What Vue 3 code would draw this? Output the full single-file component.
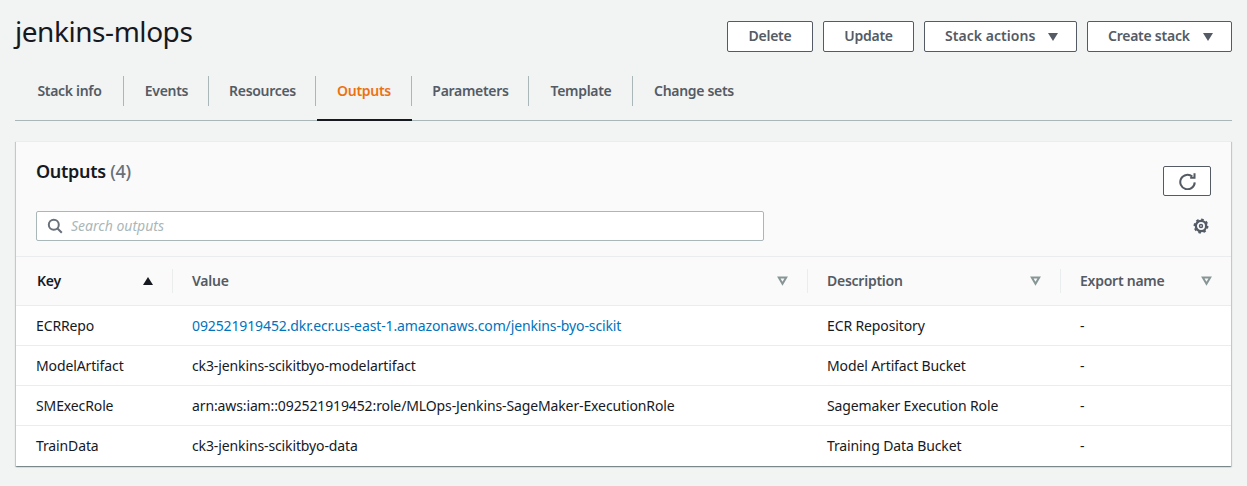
<script setup>
const tabs = ["Stack info", "Events", "Resources", "Outputs", "Parameters", "Template", "Change sets"];
const activeTab = "Outputs";

const columns = ["Value", "Description", "Export name"];

const outputs = [
  {
    key: "ECRRepo",
    value: "092521919452.dkr.ecr.us-east-1.amazonaws.com/jenkins-byo-scikit",
    link: true,
    description: "ECR Repository",
  },
  { key: "ModelArtifact", value: "ck3-jenkins-scikitbyo-modelartifact", description: "Model Artifact Bucket" },
  {
    key: "SMExecRole",
    value: "arn:aws:iam::092521919452:role/MLOps-Jenkins-SageMaker-ExecutionRole",
    description: "Sagemaker Execution Role",
  },
  { key: "TrainData", value: "ck3-jenkins-scikitbyo-data", description: "Training Data Bucket" },
];
</script>

<template>
  <div class="page">
    <header class="page-head">
      <h1>jenkins-mlops</h1>
      <div class="actions">
        <button class="btn btn-delete">Delete</button>
        <button class="btn btn-update">Update</button>
        <button class="btn btn-menu btn-stack">Stack actions <span class="caret"></span></button>
        <button class="btn btn-menu btn-create">Create stack <span class="caret"></span></button>
      </div>
    </header>

    <nav class="tabs">
      <a v-for="tab in tabs" :key="tab" class="tab" :class="{ active: tab === activeTab }">
        <span class="tab-label">{{ tab }}</span>
      </a>
    </nav>

    <section class="card">
      <div class="card-head">
        <div class="card-top">
          <h2>Outputs <span class="count">(4)</span></h2>
          <button class="refresh" aria-label="Refresh">
            <svg width="17" height="17" viewBox="0 0 16 16" fill="none" stroke="#545b64" stroke-width="1.9">
              <path d="M14.8 8.8a6.8 6.8 0 1 1-2.3-5.4" />
              <path d="M14.6 0.3v4.1h-4.1" />
            </svg>
          </button>
        </div>
        <div class="search-row">
          <label class="search">
            <svg width="16" height="16" viewBox="0 0 16 16" fill="none" stroke="#687078" stroke-width="2">
              <circle cx="6.8" cy="6.8" r="5" />
              <path d="M10.5 10.5l4.3 4.3" />
            </svg>
            <input type="text" placeholder="Search outputs" />
          </label>
          <svg class="gear" width="16" height="16" viewBox="0 0 18 18" fill="none" stroke="#545b64">
            <circle cx="9" cy="9" r="5.8" stroke-width="2.6" />
            <circle cx="9" cy="9" r="7.4" stroke-width="2" stroke-dasharray="2.9 2.9" />
            <circle cx="9" cy="9" r="1.7" stroke-width="1.6" />
          </svg>
        </div>
      </div>

      <table class="table">
        <colgroup>
          <col class="col-key" />
          <col class="col-value" />
          <col class="col-desc" />
          <col />
        </colgroup>
        <thead>
          <tr>
            <th class="sorted">
              <div class="th-inner">Key <span class="sort-up"></span></div>
            </th>
            <th v-for="col in columns" :key="col">
              <div class="th-inner">
                {{ col }}
                <svg width="11" height="10" viewBox="0 0 11 10" fill="none" stroke="#879596" stroke-width="2">
                  <path d="M1.8 1.4h7.4L5.5 7.8z" />
                </svg>
              </div>
            </th>
          </tr>
        </thead>
        <tbody>
          <tr v-for="row in outputs" :key="row.key">
            <td>{{ row.key }}</td>
            <td>
              <a v-if="row.link" class="link">{{ row.value }}</a>
              <template v-else>{{ row.value }}</template>
            </td>
            <td>{{ row.description }}</td>
            <td>-</td>
          </tr>
        </tbody>
      </table>
    </section>
  </div>
</template>

<style scoped>
.page {
  box-sizing: border-box;
  height: 486px;
  padding: 0 15px;
  background: #f2f3f3;
  color: #16191f;
  font-family: "Noto Sans", "Open Sans", sans-serif;
  font-size: 14px;
  line-height: 20px;
  letter-spacing: -0.12px;
  overflow: hidden;
}

.page-head {
  display: flex;
  justify-content: space-between;
  height: 66px;
  padding-top: 12px;
  box-sizing: border-box;
}

.page-head h1 {
  margin: 0;
  font-size: 28px;
  line-height: 38px;
  font-weight: 400;
  letter-spacing: -0.45px;
}

.actions {
  display: flex;
  gap: 10px;
  padding-top: 9px;
}

.btn {
  box-sizing: border-box;
  height: 31px;
  border: 1px solid #545b64;
  border-radius: 2px;
  background: #fff;
  color: #545b64;
  font: 600 14px/20px "Noto Sans", "Open Sans", sans-serif;
  letter-spacing: -0.25px;
  padding: 0 0 2px;
  display: flex;
  align-items: center;
  justify-content: center;
}

.btn-delete { width: 86px; }
.btn-update { width: 91px; }
.btn-stack { width: 153px; letter-spacing: 0.05px; }
.btn-create { width: 145px; }

.btn-menu {
  justify-content: space-between;
  padding-left: 20px;
  padding-right: 18px;
}

.caret {
  display: inline-block;
  width: 0;
  height: 0;
  margin-top: 2px;
  border-left: 5.5px solid transparent;
  border-right: 5.5px solid transparent;
  border-top: 8px solid #545b64;
}

.tabs {
  display: grid;
  grid-template-columns: 109px 85px 107px 96px 117px 104px 122px;
  height: 54px;
  border-bottom: 1px solid #aab7b8;
}

.tab {
  position: relative;
  display: flex;
  justify-content: center;
  align-items: flex-start;
  box-sizing: border-box;
  height: 54px;
  padding-top: 15px;
  color: #545b64;
  font-weight: 600;
  letter-spacing: -0.3px;
}

.tab:not(:last-child)::after {
  content: "";
  position: absolute;
  right: 0;
  top: 10px;
  height: 30px;
  width: 1px;
  background: #aab7b8;
}

.tab.active {
  color: #ec7211;
}

.tab.active::before {
  content: "";
  position: absolute;
  left: 1px;
  right: 0;
  bottom: -1px;
  height: 2px;
  background: #16191f;
}

.card {
  margin: 20px 1px 0;
  background: #fff;
  box-shadow: 0 1px 1px 0 rgba(0, 28, 36, 0.3), 1px 1px 1px 0 rgba(0, 28, 36, 0.15), -1px 1px 1px 0 rgba(0, 28, 36, 0.15);
}

.card-head {
  box-sizing: border-box;
  height: 115px;
  padding: 18px 20px 0;
  background: #fafafa;
  border-top: 1px solid #eaeded;
}

.card-top {
  display: flex;
  justify-content: space-between;
  align-items: flex-start;
  height: 51px;
}

.card-top h2 {
  margin: 0;
  font-size: 18px;
  line-height: 22px;
  font-weight: 600;
  letter-spacing: -0.3px;
}

.count {
  color: #687078;
  font-weight: 500;
}

.refresh {
  box-sizing: border-box;
  width: 48px;
  height: 30px;
  margin-top: 6px;
  padding: 0;
  border: 1px solid #545b64;
  border-radius: 2px;
  background: #fff;
  display: flex;
  align-items: center;
  justify-content: center;
}

.search-row {
  display: flex;
  justify-content: space-between;
  align-items: center;
}

.search {
  box-sizing: border-box;
  display: flex;
  align-items: center;
  gap: 8px;
  width: 728px;
  height: 30px;
  padding: 0 10px;
  border: 1px solid #aab7b8;
  border-radius: 2px;
  background: #fff;
}

.search input {
  flex: 1;
  border: 0;
  outline: 0;
  padding: 0;
  background: transparent;
  color: #16191f;
  font: 400 14px/20px "Noto Sans", "Open Sans", sans-serif;
}

.search input::placeholder {
  color: #aab7b8;
  font-style: italic;
  opacity: 1;
}

.gear {
  margin-right: 2px;
}

.table {
  width: 100%;
  border-collapse: collapse;
  table-layout: fixed;
}

.col-key { width: 156px; }
.col-value { width: 635px; }
.col-desc { width: 253px; }

th {
  height: 48px;
  padding: 0;
  background: #fafafa;
  border-top: 1px solid #eaeded;
  border-bottom: 1px solid #eaeded;
  color: #545b64;
  font-weight: 600;
  letter-spacing: -0.25px;
  text-align: left;
}

th.sorted {
  color: #16191f;
}

.th-inner {
  display: flex;
  justify-content: space-between;
  align-items: center;
  height: 24px;
  padding: 0 19px 0 21px;
}

th + th .th-inner {
  border-left: 1px solid #eaeded;
  padding-left: 19px;
}

.sort-up {
  width: 0;
  height: 0;
  border-left: 5.5px solid transparent;
  border-right: 5.5px solid transparent;
  border-bottom: 8px solid #16191f;
}

td {
  height: 40px;
  padding: 0 20px;
  box-sizing: border-box;
  border-bottom: 1px solid #eaeded;
  color: #16191f;
}

tbody tr:last-child td {
  border-bottom: 0;
}

.link {
  color: #0073bb;
}
</style>

<style>
html, body {
  margin: 0;
  background: #f2f3f3;
}
</style>
